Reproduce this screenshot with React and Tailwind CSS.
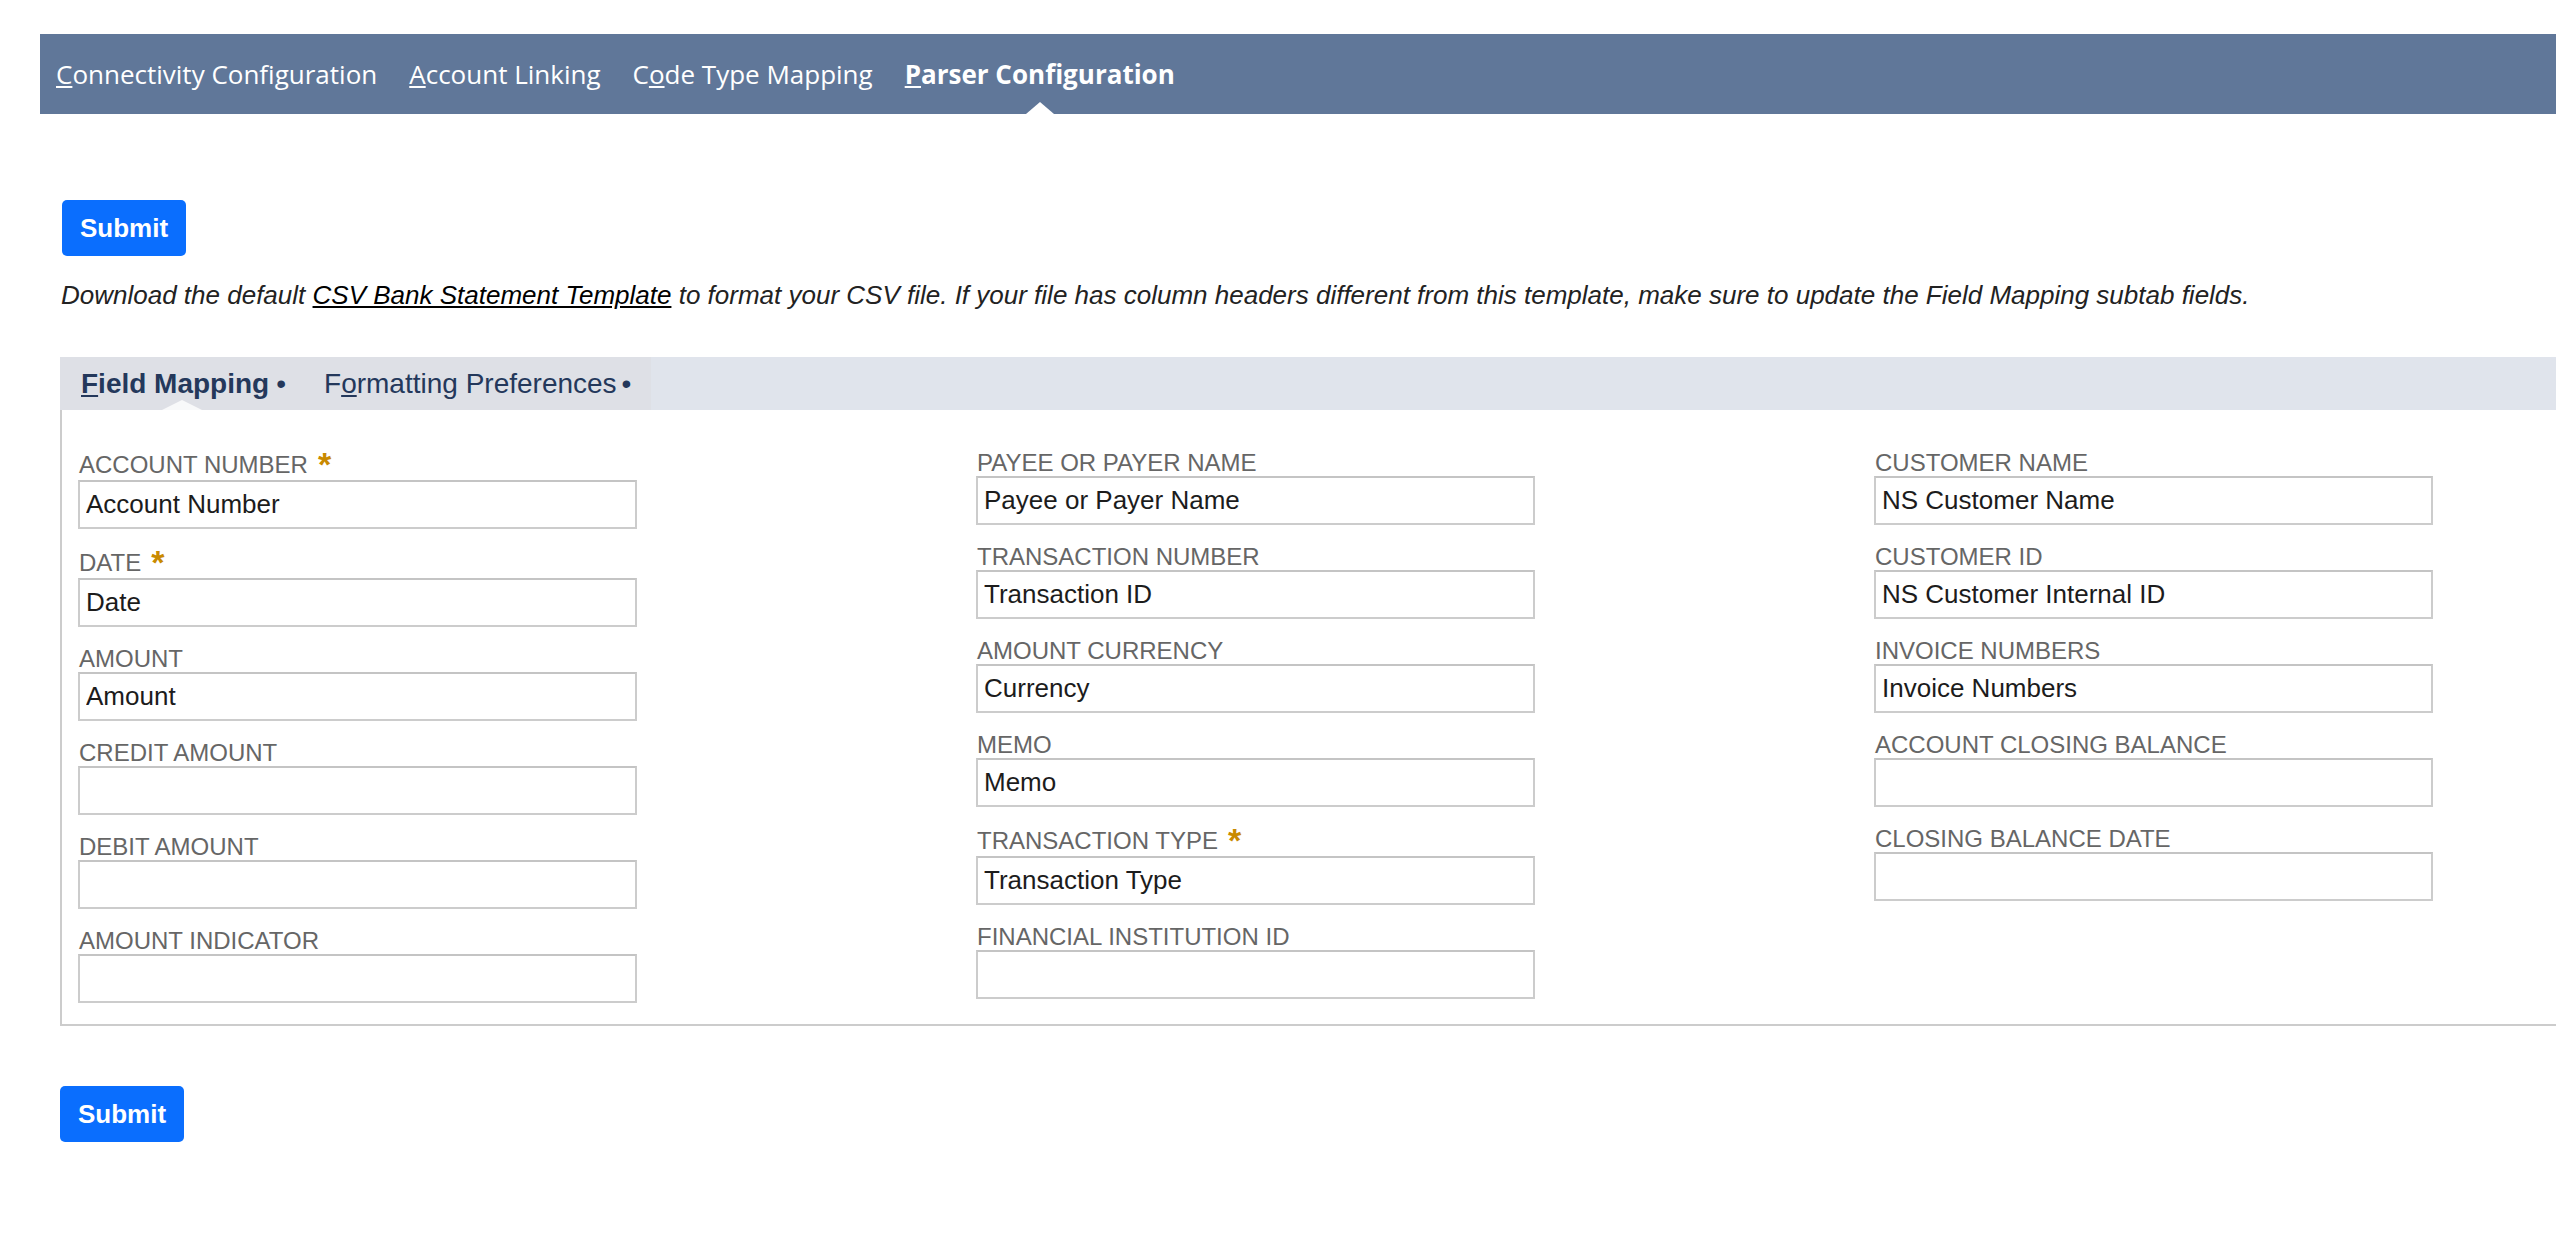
import React from "react";

const navItems = [
  { key: "C", rest: "onnectivity Configuration" },
  { key: "A", rest: "ccount Linking" },
  { pre: "C", key: "o", rest: "de Type Mapping" },
  { key: "P", rest: "arser Configuration", active: true },
];

const columns = [
  [
    { label: "ACCOUNT NUMBER", value: "Account Number", required: true },
    { label: "DATE", value: "Date", required: true },
    { label: "AMOUNT", value: "Amount" },
    { label: "CREDIT AMOUNT", value: "" },
    { label: "DEBIT AMOUNT", value: "" },
    { label: "AMOUNT INDICATOR", value: "" },
  ],
  [
    { label: "PAYEE OR PAYER NAME", value: "Payee or Payer Name" },
    { label: "TRANSACTION NUMBER", value: "Transaction ID" },
    { label: "AMOUNT CURRENCY", value: "Currency" },
    { label: "MEMO", value: "Memo" },
    { label: "TRANSACTION TYPE", value: "Transaction Type", required: true },
    { label: "FINANCIAL INSTITUTION ID", value: "" },
  ],
  [
    { label: "CUSTOMER NAME", value: "NS Customer Name" },
    { label: "CUSTOMER ID", value: "NS Customer Internal ID" },
    { label: "INVOICE NUMBERS", value: "Invoice Numbers" },
    { label: "ACCOUNT CLOSING BALANCE", value: "" },
    { label: "CLOSING BALANCE DATE", value: "" },
  ],
];

function SubmitButton({ className }) {
  return (
    <button
      type="button"
      className={
        "h-[56px] w-[124px] rounded-[5px] bg-[#0a6efe] text-[26px] font-bold text-white leading-none " +
        className
      }
    >
      Submit
    </button>
  );
}

function Field({ label, value, required }) {
  return (
    <div className="mb-[19px] flex flex-col">
      {required ? (
        <div className="flex h-[30px] items-start">
          <span className="mt-[2px] pl-[1px] text-[24px] leading-[26px] text-[#666]">{label}</span>
          <span className="ml-[10px] mt-[-3px] text-[34px] font-bold leading-[34px] text-[#c98a00]">*</span>
        </div>
      ) : (
        <div className="h-[26px] pl-[1px] text-[24px] leading-[26px] text-[#666]">{label}</div>
      )}
      <input
        readOnly
        value={value}
        className="h-[49px] w-full border-2 border-[#cccccc] border-t-[#c4c4c4] bg-white pl-[6px] text-[26px] text-[#1c1c1c] outline-none"
      />
    </div>
  );
}

export default function App() {
  return (
    <div className="min-h-screen bg-white pt-[34px] font-['Liberation_Sans',Arial,sans-serif]">
      {/* record tabs */}
      <nav className="ml-[40px] flex h-[80px] items-center bg-[#607799] font-['Open_Sans',sans-serif] text-[26px] text-white">
        {navItems.map((item, i) => (
          <a
            key={i}
            className={
              "relative flex h-full items-center px-4 whitespace-nowrap " +
              (item.active ? "font-bold" : "")
            }
          >
            <span>
              {item.pre}
              <u>{item.key}</u>
              {item.rest}
            </span>
            {item.active && (
              <span className="absolute bottom-0 left-1/2 h-0 w-0 -translate-x-1/2 border-x-[14px] border-b-[12px] border-x-transparent border-b-white" />
            )}
          </a>
        ))}
      </nav>

      <div className="mt-[86px]">
        <SubmitButton className="ml-[62px]" />
      </div>

      <p className="ml-[61px] mt-[24px] text-[26px] italic leading-[30px] text-[#222]">
        Download the default{" "}
        <a className="text-black underline">CSV Bank Statement Template</a> to format your CSV file. If your
        file has column headers different from this template, make sure to update the Field Mapping subtab
        fields.
      </p>

      {/* subtabs */}
      <div className="ml-[60px] mt-[47px] flex h-[53px] bg-[#e0e4ec] text-[28px] text-[#24385b]">
        <div className="flex bg-[#dee0e6]">
          <div className="relative flex items-center pl-[21px] pr-[18px] font-bold">
            <span>
              <u>F</u>ield Mapping
            </span>
            <span className="ml-[7px] font-normal">•</span>
            <span className="absolute bottom-0 left-1/2 h-0 w-0 -translate-x-1/2 border-x-[20px] border-b-[10px] border-x-transparent border-b-white/80" />
          </div>
          <div className="flex items-center px-[20px]">
            <span>
              F<u>o</u>rmatting Preferences
            </span>
            <span className="ml-[5px]">•</span>
          </div>
        </div>
      </div>

      {/* field mapping panel */}
      <div className="ml-[60px] flex gap-[339px] border-b-2 border-l-2 border-[#cccccc] pb-[2px] pl-[16px] pt-[40px]">
        {columns.map((col, ci) => (
          <div key={ci} className="flex w-[559px] flex-col">
            {col.map((f) => (
              <Field key={f.label} {...f} />
            ))}
          </div>
        ))}
      </div>

      <div className="mt-[60px]">
        <SubmitButton className="ml-[60px]" />
      </div>
    </div>
  );
}
